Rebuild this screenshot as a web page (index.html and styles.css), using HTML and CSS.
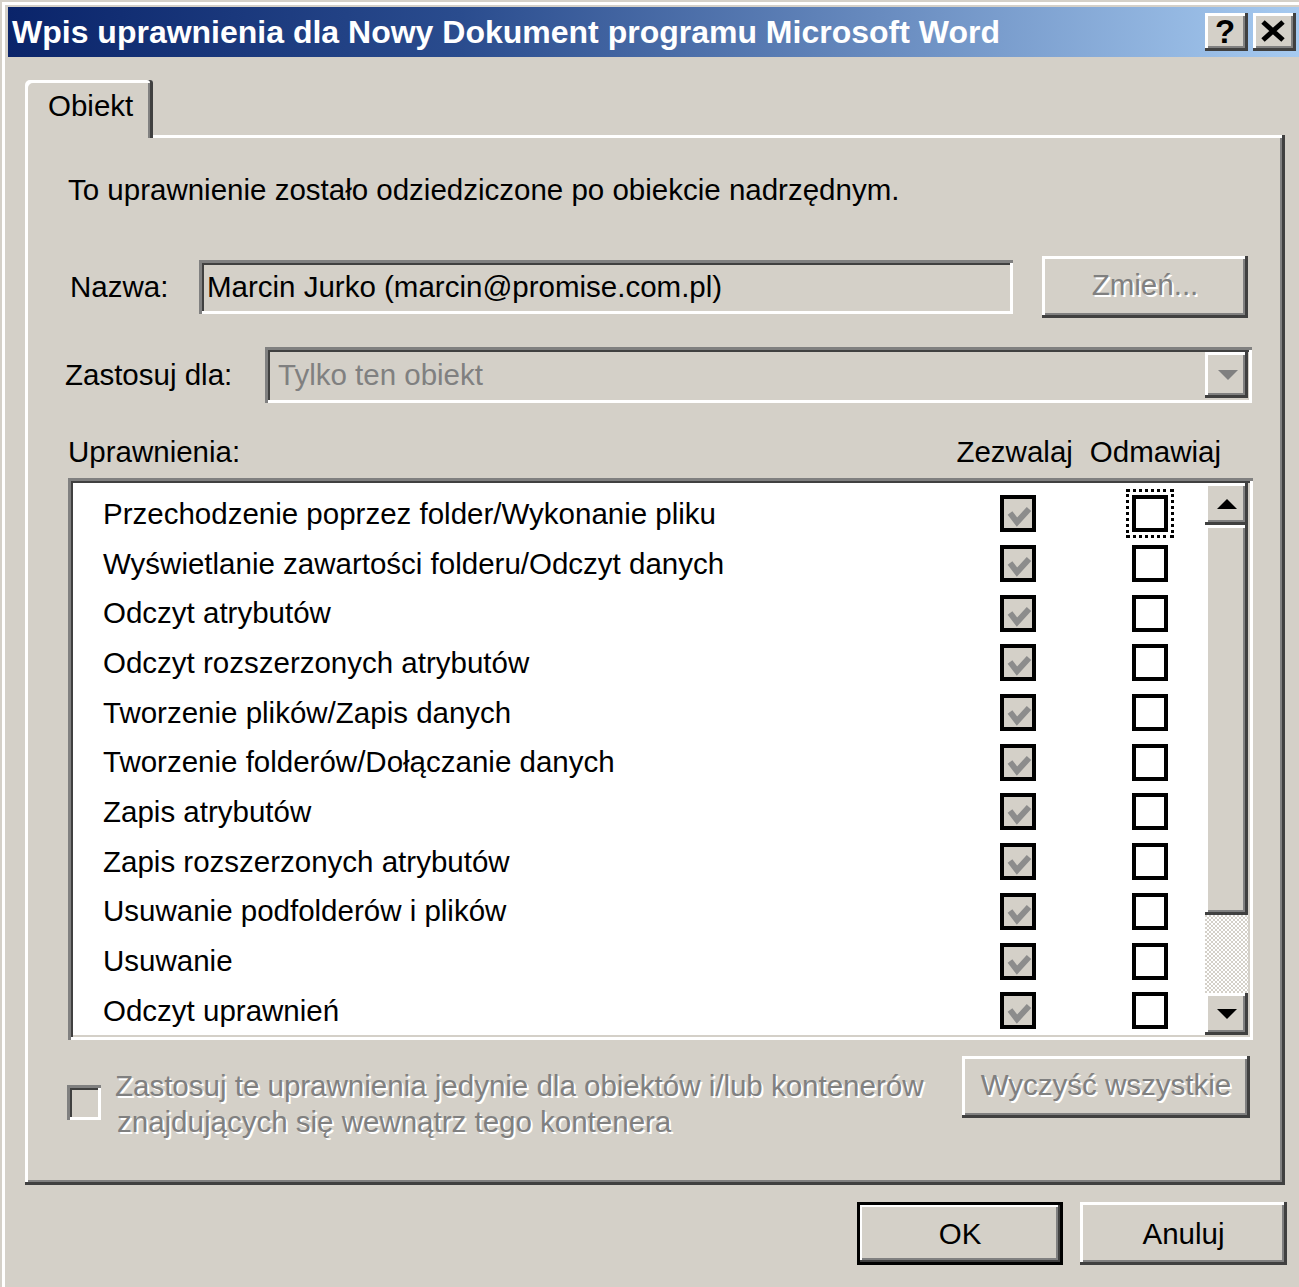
FILE: index.html
```html
<!DOCTYPE html>
<html lang="pl">
<head>
<meta charset="utf-8">
<title>Wpis uprawnienia</title>
<link rel="stylesheet" href="styles.css">
</head>
<body>
<div class="window">
  <div class="titlebar">
    <span class="title">Wpis uprawnienia dla Nowy Dokument programu Microsoft Word</span>
    <div class="caption-buttons">
      <span class="cap-btn help">?</span>
      <span class="cap-btn close">
        <svg width="26" height="22" viewBox="0 0 26 22"><path d="M3 2 L23 20 M23 2 L3 20" stroke="#000" stroke-width="5" fill="none"/></svg>
      </span>
    </div>
  </div>

  <div class="client">
    <div class="tabs">
      <div class="tab active">Obiekt</div>
    </div>

    <div class="panel">
      <p class="info">To uprawnienie zostało odziedziczone po obiekcie nadrzędnym.</p>

      <div class="field-row name-row">
        <span class="lbl name-lbl">Nazwa:</span>
        <div class="textbox">Marcin Jurko (marcin@promise.com.pl)</div>
        <button class="btn disabled change-btn">Zmień...</button>
      </div>

      <div class="field-row apply-row">
        <span class="lbl apply-lbl">Zastosuj dla:</span>
        <div class="combo">
          <span class="combo-text">Tylko ten obiekt</span>
          <span class="combo-btn"><i class="arrow down gray"></i></span>
        </div>
      </div>

      <div class="perm-header">
        <span class="perm-title">Uprawnienia:</span>
        <span class="col-allow">Zezwalaj</span>
        <span class="col-deny">Odmawiaj</span>
      </div>

      <div class="listbox">
        <ul class="perm-list">
          <li class="perm"><span class="perm-name">Przechodzenie poprzez folder/Wykonanie pliku</span><span class="chk allow"><svg class="tick" viewBox="0 0 28 29"><polyline points="6,14 13,23 25,10"/></svg></span><span class="chk deny focus"></span></li>
          <li class="perm"><span class="perm-name">Wyświetlanie zawartości folderu/Odczyt danych</span><span class="chk allow"><svg class="tick" viewBox="0 0 28 29"><polyline points="6,14 13,23 25,10"/></svg></span><span class="chk deny"></span></li>
          <li class="perm"><span class="perm-name">Odczyt atrybutów</span><span class="chk allow"><svg class="tick" viewBox="0 0 28 29"><polyline points="6,14 13,23 25,10"/></svg></span><span class="chk deny"></span></li>
          <li class="perm"><span class="perm-name">Odczyt rozszerzonych atrybutów</span><span class="chk allow"><svg class="tick" viewBox="0 0 28 29"><polyline points="6,14 13,23 25,10"/></svg></span><span class="chk deny"></span></li>
          <li class="perm"><span class="perm-name">Tworzenie plików/Zapis danych</span><span class="chk allow"><svg class="tick" viewBox="0 0 28 29"><polyline points="6,14 13,23 25,10"/></svg></span><span class="chk deny"></span></li>
          <li class="perm"><span class="perm-name">Tworzenie folderów/Dołączanie danych</span><span class="chk allow"><svg class="tick" viewBox="0 0 28 29"><polyline points="6,14 13,23 25,10"/></svg></span><span class="chk deny"></span></li>
          <li class="perm"><span class="perm-name">Zapis atrybutów</span><span class="chk allow"><svg class="tick" viewBox="0 0 28 29"><polyline points="6,14 13,23 25,10"/></svg></span><span class="chk deny"></span></li>
          <li class="perm"><span class="perm-name">Zapis rozszerzonych atrybutów</span><span class="chk allow"><svg class="tick" viewBox="0 0 28 29"><polyline points="6,14 13,23 25,10"/></svg></span><span class="chk deny"></span></li>
          <li class="perm"><span class="perm-name">Usuwanie podfolderów i plików</span><span class="chk allow"><svg class="tick" viewBox="0 0 28 29"><polyline points="6,14 13,23 25,10"/></svg></span><span class="chk deny"></span></li>
          <li class="perm"><span class="perm-name">Usuwanie</span><span class="chk allow"><svg class="tick" viewBox="0 0 28 29"><polyline points="6,14 13,23 25,10"/></svg></span><span class="chk deny"></span></li>
          <li class="perm"><span class="perm-name">Odczyt uprawnień</span><span class="chk allow"><svg class="tick" viewBox="0 0 28 29"><polyline points="6,14 13,23 25,10"/></svg></span><span class="chk deny"></span></li>
        </ul>
        <div class="scrollbar">
          <span class="sb-btn"><i class="arrow up"></i></span>
          <span class="sb-thumb"></span>
          <span class="sb-track"></span>
          <span class="sb-btn"><i class="arrow down"></i></span>
        </div>
      </div>

      <div class="bottom-row">
        <span class="check3d"></span>
        <span class="bottom-text">Zastosuj te uprawnienia jedynie dla obiektów i/lub kontenerów<br><span class="indent">znajdujących się wewnątrz tego kontenera</span></span>
        <button class="btn disabled clear-btn">Wyczyść wszystkie</button>
      </div>
    </div>

    <div class="footer">
      <button class="btn default ok-btn">OK</button>
      <button class="btn cancel-btn">Anuluj</button>
    </div>
  </div>
</div>
</body>
</html>
```

FILE: styles.css
```css
* { box-sizing: border-box; }

html, body {
  margin: 0;
  padding: 0;
}

body {
  width: 1299px;
  height: 1287px;
  overflow: hidden;
  background: #d4d0c8;
  font-family: "Liberation Sans", Arial, sans-serif;
  font-size: 29.5px;
  color: #000;
}

/* window frame */
.window {
  height: 1287px;
  padding: 7px 0 0 8px;
  box-shadow: inset 2px 2px 0 #d4d0c8, inset 5px 5px 0 #fff;
}

.titlebar {
  height: 50px;
  display: flex;
  align-items: center;
  justify-content: space-between;
  padding: 0 3px 0 4px;
  background: linear-gradient(to right, #0a246a 0%, #2a4c8e 35%, #a6caf0 100%);
}

.title {
  color: #fff;
  font-weight: bold;
  font-size: 32px;
  line-height: 1;
  white-space: nowrap;
}

.caption-buttons {
  display: flex;
  gap: 5px;
}

.cap-btn {
  width: 43px;
  height: 38px;
  display: flex;
  align-items: center;
  justify-content: center;
  background: #d4d0c8;
  box-shadow: inset -3px -3px 0 #404040, inset 3px 3px 0 #fff, inset -5px -5px 0 #808080;
}

.cap-btn.help {
  font-weight: bold;
  font-size: 33px;
  line-height: 1;
  padding: 0 3px 2px 0;
}

.cap-btn.close svg {
  margin: 0 3px 2px 0;
}

/* client area */
.client {
  padding: 23px 12px 0 17px;
}

.tabs {
  display: flex;
  height: 55px;
}

.tab {
  position: relative;
  z-index: 1;
  width: 128px;
  height: 58px;
  padding: 6px 0 0 23px;
  line-height: 40px;
  background: #d4d0c8;
  border-top-left-radius: 5px;
  border-top-right-radius: 3px;
  box-shadow: inset -3px 0 0 #404040, inset 3px 3px 0 #fff, inset -5px 0 0 #808080;
}

.panel {
  width: 1260px;
  height: 1050px;
  display: flex;
  flex-direction: column;
  padding: 0 32px 0 40px;
  box-shadow: inset -3px -3px 0 #404040, inset 3px 3px 0 #fff, inset -5px -5px 0 #808080;
}

.info {
  margin: 35px 0 0 3px;
  height: 40px;
  line-height: 40px;
}

.field-row {
  display: flex;
  align-items: center;
}

.name-row {
  margin-top: 46px;
  height: 62px;
}

.name-lbl {
  margin-left: 5px;
  width: 129px;
}

.textbox {
  width: 814px;
  height: 54px;
  line-height: 54px;
  padding-left: 8px;
  background: #d4d0c8;
  white-space: nowrap;
  box-shadow: inset 3px 3px 0 #808080, inset -3px -3px 0 #fff, inset 5px 5px 0 #404040, inset -5px -5px 0 #d4d0c8;
}

/* push buttons */
.btn {
  font: inherit;
  color: #000;
  background: #d4d0c8;
  border: none;
  padding: 0;
  display: flex;
  align-items: center;
  justify-content: center;
  box-shadow: inset -3px -3px 0 #404040, inset 3px 3px 0 #fff, inset -5px -5px 0 #808080;
}

.btn.disabled {
  color: #808080;
  text-shadow: 2px 2px 0 #fff;
}

.btn.default {
  box-shadow: inset 0 0 0 3px #000, inset -5px -5px 0 #404040, inset 5px 5px 0 #fff, inset -7px -7px 0 #808080;
}

.change-btn {
  margin-left: 29px;
  width: 206px;
  height: 62px;
  padding-bottom: 4px;
}

.apply-row {
  margin-top: 29px;
  height: 56px;
}

.apply-lbl {
  width: 200px;
}

.combo {
  width: 987px;
  height: 56px;
  display: flex;
  align-items: center;
  padding: 5px 4px 5px 13px;
  background: #d4d0c8;
  box-shadow: inset 3px 3px 0 #808080, inset -3px -3px 0 #fff, inset 5px 5px 0 #404040, inset -5px -5px 0 #d4d0c8;
}

.combo-text {
  flex: 1;
  color: #808080;
}

.combo-btn {
  width: 43px;
  height: 46px;
  display: flex;
  align-items: center;
  justify-content: center;
  background: #d4d0c8;
  box-shadow: inset -3px -3px 0 #404040, inset 3px 3px 0 #fff, inset -5px -5px 0 #808080;
}

/* arrow glyphs */
.arrow {
  display: block;
  width: 0;
  height: 0;
  border-left: 10px solid transparent;
  border-right: 10px solid transparent;
}

.arrow.up {
  border-bottom: 10px solid #000;
}

.arrow.down {
  border-top: 10px solid #000;
}

.arrow.down.gray {
  border-top-color: #808080;
  margin-left: 2px;
}

/* permission header */
.perm-header {
  margin: 29px 32px 0 3px;
  height: 40px;
  display: flex;
  align-items: center;
}

.perm-title {
  flex: 1;
}

.col-deny {
  margin-left: 17px;
}

/* list box */
.listbox {
  margin: 6px 0 0 3px;
  width: 1185px;
  height: 562px;
  display: flex;
  padding: 5px;
  background: #fff;
  box-shadow: inset 3px 3px 0 #808080, inset -3px -3px 0 #fff, inset 5px 5px 0 #404040, inset -5px -5px 0 #d4d0c8;
}

.perm-list {
  flex: 1;
  list-style: none;
  margin: 0;
  padding: 6px 0 0 0;
}

.perm {
  height: 49.7px;
  display: flex;
  align-items: center;
  padding: 0 37px 0 30px;
}

.perm-name {
  flex: 1;
  white-space: nowrap;
}

.chk {
  width: 36px;
  height: 37px;
  border: 4px solid #000;
  background: #fff;
  display: block;
}

.chk.allow {
  background: #d4d0c8;
}

.chk.deny {
  margin-left: 96px;
}

.chk.focus {
  outline: 3px dotted #000;
  outline-offset: 3px;
}

.tick {
  display: block;
  width: 28px;
  height: 29px;
}

.tick polyline {
  fill: none;
  stroke: #8c8c8c;
  stroke-width: 6;
}

/* scroll bar */
.scrollbar {
  width: 43px;
  display: flex;
  flex-direction: column;
}

.sb-btn {
  height: 42px;
  display: flex;
  align-items: center;
  justify-content: center;
  background: #d4d0c8;
  box-shadow: inset -3px -3px 0 #404040, inset 3px 3px 0 #fff, inset -5px -5px 0 #808080;
}

.sb-thumb {
  height: 390px;
  background: #d4d0c8;
  box-shadow: inset -3px -3px 0 #404040, inset 3px 3px 0 #fff, inset -5px -5px 0 #808080;
}

.sb-track {
  flex: 1;
  background: repeating-conic-gradient(#fff 0 25%, #d4d0c8 0 50%);
  background-size: 4px 4px;
}

/* bottom options */
.bottom-row {
  margin-top: 16px;
  display: flex;
  align-items: flex-start;
}

.check3d {
  margin: 29px 0 0 2px;
  width: 34px;
  height: 35px;
  background: #d4d0c8;
  box-shadow: inset 3px 3px 0 #808080, inset -3px -3px 0 #fff, inset 5px 5px 0 #404040, inset -5px -5px 0 #d4d0c8;
}

.bottom-text {
  margin: 12px 0 0 14px;
  line-height: 36px;
  color: #808080;
  text-shadow: 2px 2px 0 #fff;
  white-space: nowrap;
}

.indent {
  padding-left: 2px;
}

.clear-btn {
  margin-left: auto;
  margin-right: 3px;
  width: 288px;
  height: 62px;
  padding-bottom: 4px;
}

/* dialog buttons */
.footer {
  margin-top: 17px;
  display: flex;
  justify-content: flex-end;
  gap: 17px;
}

.ok-btn {
  width: 206px;
  height: 63px;
}

.cancel-btn {
  width: 207px;
  height: 63px;
}
```
